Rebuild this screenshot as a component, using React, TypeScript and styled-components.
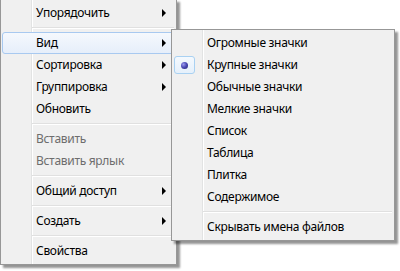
import React from "react";
import styled, { createGlobalStyle } from "styled-components";

const Global = createGlobalStyle`
  html, body { margin: 0; padding: 0; background: #ffffff; }
  body { font-family: "Segoe UI", "Noto Sans", "Open Sans", sans-serif; }
`;

const Desktop = styled.div`
  position: relative;
  width: 400px;
  height: 271px;
  overflow: hidden;
  background: #ffffff;
`;

const Menu = styled.div<{ $left: number; $top: number; $width: number }>`
  position: absolute;
  left: ${(p) => p.$left}px;
  top: ${(p) => p.$top}px;
  width: ${(p) => p.$width}px;
  box-sizing: border-box;
  padding: 2px;
  border: 1px solid #979797;
  background:
    linear-gradient(
      to right,
      transparent 30px,
      #e2e3e3 30px,
      #e2e3e3 31px,
      #ffffff 31px,
      #ffffff 32px,
      transparent 32px
    ),
    #f0f0f0;
  box-shadow: 3px 3px 2px rgba(0, 0, 0, 0.42);
  display: flex;
  flex-direction: column;
  font-size: 12px;
  letter-spacing: -0.3px;
  color: #000;
`;

const Item = styled.div<{ $hot?: boolean; $disabled?: boolean }>`
  height: 22px;
  box-sizing: border-box;
  display: grid;
  grid-template-columns: 33px 1fr auto;
  align-items: center;
  border: 1px solid ${(p) => (p.$hot ? "#a8c9f0" : "transparent")};
  border-radius: 3px;
  background: ${(p) =>
    p.$hot ? "linear-gradient(to bottom, #f5f8fd, #e6eefa)" : "transparent"};
  color: ${(p) => (p.$disabled ? "#6d6d6d" : "#000")};
  white-space: nowrap;
  margin-left: -1px;
  margin-right: -1px;
`;

const Gutter = styled.span`
  display: flex;
  align-items: center;
  height: 100%;
`;

const Label = styled.span`
  line-height: 20px;
`;

const Arrow = styled.span`
  width: 0;
  height: 0;
  border-left: 4px solid #000;
  border-top: 4px solid transparent;
  border-bottom: 4px solid transparent;
  margin-right: 8px;
`;

const CheckBox = styled.span`
  width: 21px;
  height: 18px;
  box-sizing: border-box;
  border: 1px solid #a9d1f2;
  border-radius: 3px;
  background: linear-gradient(to bottom, #f4f9fe, #e5f0fb);
  display: flex;
  align-items: center;
  justify-content: center;
`;

const Bullet = styled.span`
  width: 7px;
  height: 7px;
  border-radius: 50%;
  background: radial-gradient(circle at 35% 35%, #9a9af0 0%, #4d4db8 45%, #1f1f6e 100%);
`;

const Separator = styled.div`
  height: 8px;
  display: flex;
  align-items: center;
  padding-left: 29px;
`;

const SepLine = styled.div`
  flex: 1;
  height: 0;
  border-top: 1px solid #e0e0e0;
  border-bottom: 1px solid #ffffff;
`;

type Entry =
  | { kind: "item"; label: string; sub?: boolean; hot?: boolean; disabled?: boolean; radio?: boolean }
  | { kind: "sep" };

const mainEntries: Entry[] = [
  { kind: "item", label: "Упорядочить", sub: true },
  { kind: "sep" },
  { kind: "item", label: "Вид", sub: true, hot: true },
  { kind: "item", label: "Сортировка", sub: true },
  { kind: "item", label: "Группировка", sub: true },
  { kind: "item", label: "Обновить" },
  { kind: "sep" },
  { kind: "item", label: "Вставить", disabled: true },
  { kind: "item", label: "Вставить ярлык", disabled: true },
  { kind: "sep" },
  { kind: "item", label: "Общий доступ", sub: true },
  { kind: "sep" },
  { kind: "item", label: "Создать", sub: true },
  { kind: "sep" },
  { kind: "item", label: "Свойства" },
];

const viewEntries: Entry[] = [
  { kind: "item", label: "Огромные значки" },
  { kind: "item", label: "Крупные значки", radio: true },
  { kind: "item", label: "Обычные значки" },
  { kind: "item", label: "Мелкие значки" },
  { kind: "item", label: "Список" },
  { kind: "item", label: "Таблица" },
  { kind: "item", label: "Плитка" },
  { kind: "item", label: "Содержимое" },
  { kind: "sep" },
  { kind: "item", label: "Скрывать имена файлов" },
];

function renderEntries(entries: Entry[]) {
  return entries.map((e, i) =>
    e.kind === "sep" ? (
      <Separator key={i}>
        <SepLine />
      </Separator>
    ) : (
      <Item key={i} $hot={e.hot} $disabled={e.disabled}>
        <Gutter>
          {e.radio && (
            <CheckBox>
              <Bullet />
            </CheckBox>
          )}
        </Gutter>
        <Label>{e.label}</Label>
        {e.sub ? <Arrow /> : <span />}
      </Item>
    )
  );
}

export default function App() {
  return (
    <>
      <Global />
      <Desktop>
        <Menu $left={0} $top={-1} $width={177}>
          {renderEntries(mainEntries)}
        </Menu>
        <Menu $left={171} $top={29} $width={224}>
          {renderEntries(viewEntries)}
        </Menu>
      </Desktop>
    </>
  );
}
